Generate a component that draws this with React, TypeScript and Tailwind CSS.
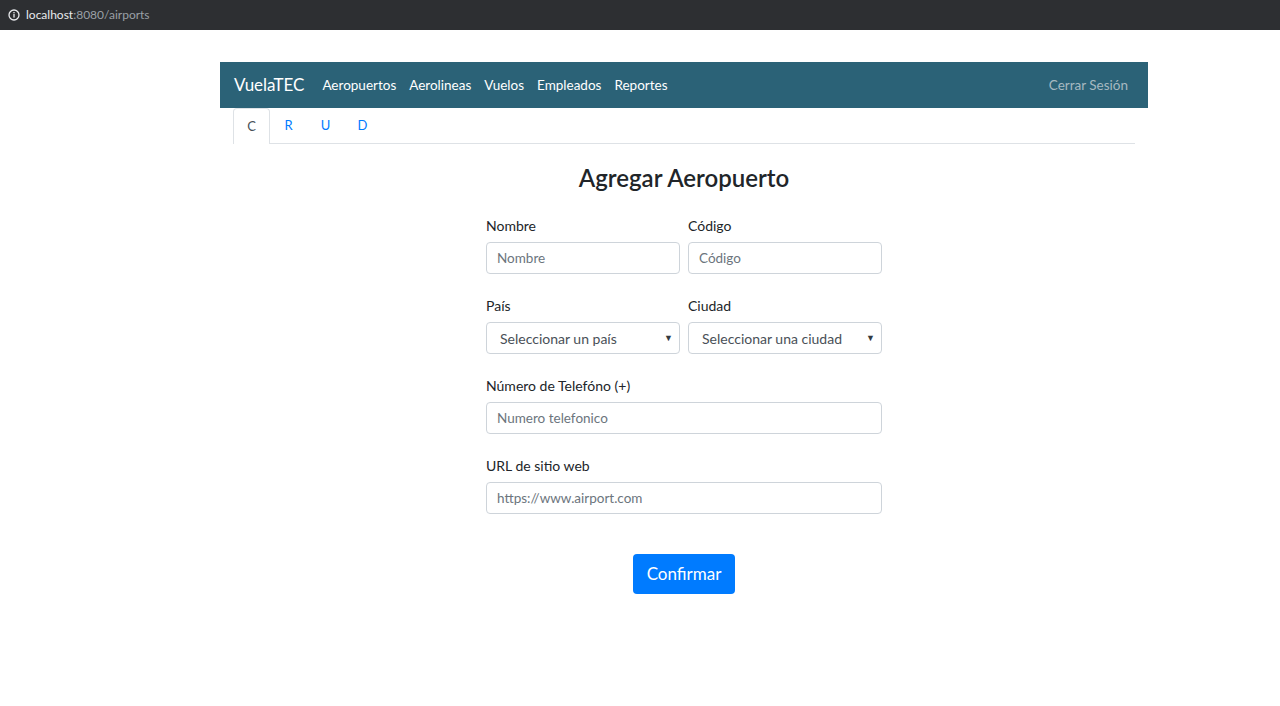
const font = { fontFamily: 'Lato, "Noto Sans", sans-serif' };

const navLinks = ['Aeropuertos', 'Aerolineas', 'Vuelos', 'Empleados', 'Reportes'];
const tabs = ['C', 'R', 'U', 'D'];

const Field = ({ label, children }: { label: string; children: React.ReactNode }) => (
  <div className="flex flex-col">
    <label className="text-[14px] text-[#212529] h-[16px] leading-[16px] mb-[8px]">{label}</label>
    {children}
  </div>
);

const TextInput = ({ placeholder }: { placeholder: string }) => (
  <input
    placeholder={placeholder}
    className="h-[32px] w-full border border-[#ced4da] rounded-[4px] px-[10px] text-[13.5px] text-[#495057] placeholder:text-[#6c757d] outline-none bg-white"
    style={font}
  />
);

const SelectBox = ({ text }: { text: string }) => (
  <div className="h-[32px] w-full border border-[#ced4da] rounded-[4px] pl-[13px] pr-[6px] flex items-center justify-between text-[14px] text-[#495057] bg-white">
    <span>{text}</span>
    <span className="text-[9px] text-[#343a40]">▼</span>
  </div>
);

export default function App() {
  return (
    <div className="min-h-[706px] bg-white" style={font}>
      {/* browser address bar */}
      <div className="h-[30px] bg-[#2d2f32] flex items-center pl-[8px] gap-[6px]">
        <svg width="12" height="12" viewBox="0 0 12 12">
          <circle cx="6" cy="6" r="5" fill="none" stroke="#e8eaed" strokeWidth="1.3" />
          <rect x="5.35" y="5" width="1.3" height="3.6" fill="#e8eaed" />
          <rect x="5.35" y="3" width="1.3" height="1.3" fill="#e8eaed" />
        </svg>
        <span className="text-[12px] text-[#9aa0a6]">
          <span className="text-[#e8eaed]">localhost</span>:8080/airports
        </span>
      </div>

      <div className="pl-[220px] pt-[32px]">
        <div className="w-[928px]">
          {/* navbar */}
          <nav className="h-[46px] bg-[#2b6277] flex items-center pl-[14px] pr-[20px]">
            <span className="text-white text-[17px] mr-[18px]">VuelaTEC</span>
            <div className="flex gap-[13px]">
              {navLinks.map((l) => (
                <span key={l} className="text-[13.5px] text-white">
                  {l}
                </span>
              ))}
            </div>
            <span className="ml-auto text-[13.5px] text-[#a6b9c1]">Cerrar Sesión</span>
          </nav>

          {/* tabs */}
          <div className="mx-[13px] flex border-b border-[#dee2e6] h-[36px]">
            {tabs.map((t, i) => (
              <div
                key={t}
                className={
                  i === 0
                    ? 'w-[37px] flex items-center justify-center text-[13px] text-[#495057] border border-b-0 border-[#dee2e6] rounded-t-[4px] bg-white -mb-px'
                    : 'w-[37px] flex items-center justify-center text-[13px] text-[#007bff]'
                }
              >
                {t}
              </div>
            ))}
          </div>

          {/* form */}
          <div className="flex flex-col items-center">
            <h1 className="text-[24px] font-semibold text-[#212529] mt-[20px] leading-[28px]">Agregar Aeropuerto</h1>
            <div className="w-[396px] mt-[26px] flex flex-col gap-[24px]">
              <div className="grid grid-cols-2 gap-[8px]">
                <Field label="Nombre">
                  <TextInput placeholder="Nombre" />
                </Field>
                <Field label="Código">
                  <TextInput placeholder="Código" />
                </Field>
              </div>
              <div className="grid grid-cols-2 gap-[8px]">
                <Field label="País">
                  <SelectBox text="Seleccionar un país" />
                </Field>
                <Field label="Ciudad">
                  <SelectBox text="Seleccionar una ciudad" />
                </Field>
              </div>
              <Field label="Número de Telefóno (+)">
                <TextInput placeholder="Numero telefonico" />
              </Field>
              <Field label="URL de sitio web">
                <TextInput placeholder="https://www.airport.com" />
              </Field>
            </div>
            <button className="mt-[40px] w-[102px] h-[40px] rounded-[4px] bg-[#007bff] text-white text-[17px]">
              Confirmar
            </button>
          </div>
        </div>
      </div>
    </div>
  );
}
